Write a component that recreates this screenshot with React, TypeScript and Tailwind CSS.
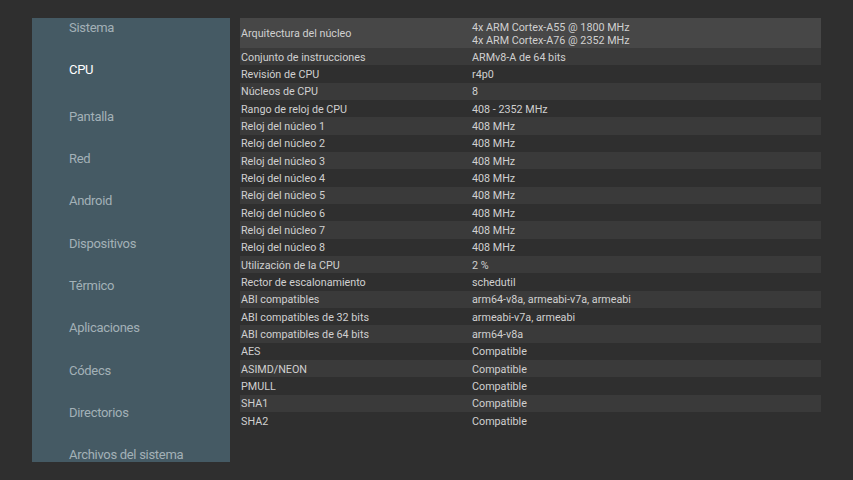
import React from 'react';

const menu = [
  'Sistema',
  'CPU',
  'Pantalla',
  'Red',
  'Android',
  'Dispositivos',
  'Térmico',
  'Aplicaciones',
  'Códecs',
  'Directorios',
  'Archivos del sistema',
];

const rows: { label: string; value: string[] }[] = [
  { label: 'Arquitectura del núcleo', value: ['4x ARM Cortex-A55 @ 1800 MHz', '4x ARM Cortex-A76 @ 2352 MHz'] },
  { label: 'Conjunto de instrucciones', value: ['ARMv8-A de 64 bits'] },
  { label: 'Revisión de CPU', value: ['r4p0'] },
  { label: 'Núcleos de CPU', value: ['8'] },
  { label: 'Rango de reloj de CPU', value: ['408 - 2352 MHz'] },
  { label: 'Reloj del núcleo 1', value: ['408 MHz'] },
  { label: 'Reloj del núcleo 2', value: ['408 MHz'] },
  { label: 'Reloj del núcleo 3', value: ['408 MHz'] },
  { label: 'Reloj del núcleo 4', value: ['408 MHz'] },
  { label: 'Reloj del núcleo 5', value: ['408 MHz'] },
  { label: 'Reloj del núcleo 6', value: ['408 MHz'] },
  { label: 'Reloj del núcleo 7', value: ['408 MHz'] },
  { label: 'Reloj del núcleo 8', value: ['408 MHz'] },
  { label: 'Utilización de la CPU', value: ['2 %'] },
  { label: 'Rector de escalonamiento', value: ['schedutil'] },
  { label: 'ABI compatibles', value: ['arm64-v8a, armeabi-v7a, armeabi'] },
  { label: 'ABI compatibles de 32 bits', value: ['armeabi-v7a, armeabi'] },
  { label: 'ABI compatibles de 64 bits', value: ['arm64-v8a'] },
  { label: 'AES', value: ['Compatible'] },
  { label: 'ASIMD/NEON', value: ['Compatible'] },
  { label: 'PMULL', value: ['Compatible'] },
  { label: 'SHA1', value: ['Compatible'] },
  { label: 'SHA2', value: ['Compatible'] },
];

export default function App() {
  return (
    <div
      className="w-[853px] h-[480px] bg-[#2f2f2f] flex items-start pt-[18px] pl-[32px] overflow-hidden"
      style={{ fontFamily: 'Roboto, "Noto Sans", sans-serif' }}
    >
      {/* Sidebar */}
      <div className="w-[198px] h-[444px] bg-[#455a64] overflow-hidden shrink-0">
        <ul className="-mt-[12px]">
          {menu.map((item) => {
            const active = item === 'CPU';
            return (
              <li
                key={item}
                className={`flex items-center pl-[37px] text-[13px] leading-[15px] tracking-[-0.3px] ${
                  active ? 'h-[46.7px] pb-[4.4px] text-white' : 'h-[42.33px] text-[#a3b1b7]'
                }`}
              >
                {item}
              </li>
            );
          })}
        </ul>
      </div>

      {/* Details table */}
      <div className="ml-[10px] w-[581px] text-[10.75px] text-[#d0d0d0] leading-[13px]">
        {rows.map((row, i) => (
          <div
            key={row.label}
            className={`grid grid-cols-[232px_1fr] items-center pt-[1px] ${
              i === 0 ? 'h-[30px] bg-[#474747]' : i % 2 === 1 ? 'h-[17.33px] bg-[#3a3a3a]' : 'h-[17.33px]'
            }`}
          >
            <div className="pl-[1px] whitespace-nowrap">{row.label}</div>
            <div className="whitespace-nowrap">
              {row.value.map((v) => (
                <div key={v}>{v}</div>
              ))}
            </div>
          </div>
        ))}
      </div>
    </div>
  );
}
